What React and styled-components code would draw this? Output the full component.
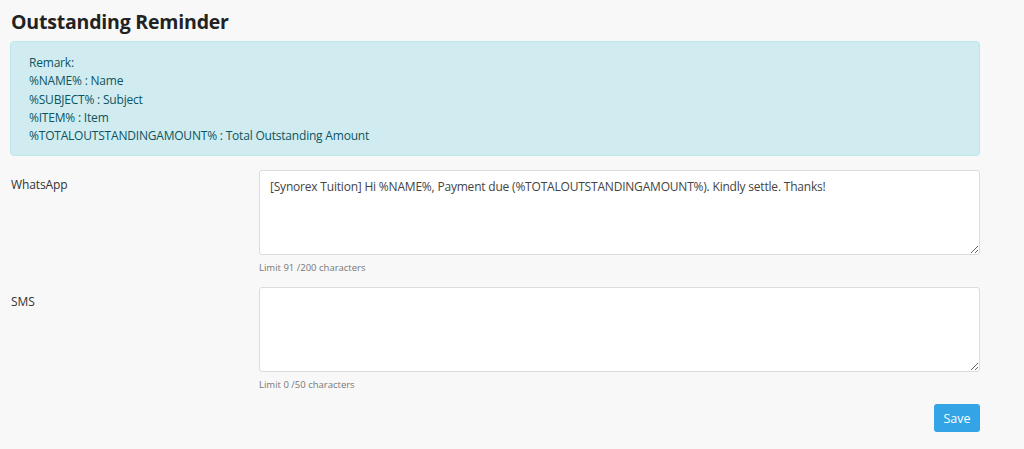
import React, { useState } from 'react';
import styled, { createGlobalStyle } from 'styled-components';

const GlobalStyle = createGlobalStyle`
  html, body {
    margin: 0;
    padding: 0;
    background: #f8f8f8;
  }

  body {
    font-family: "Open Sans", "Noto Sans", sans-serif;
    color: #212529;
  }

  * {
    box-sizing: border-box;
  }
`;

const Page = styled.div`
  width: 1024px;
  padding: 9px 44px 0 10px;
`;

const Title = styled.h1`
  margin: 0 0 7px 1px;
  font-size: 19.5px;
  font-weight: 700;
  letter-spacing: -0.2px;
  line-height: 25px;
  color: #222;
`;

const Alert = styled.div`
  padding: 12px 18px 10px;
  margin-bottom: 14px;
  background: #d1ecf1;
  border: 1px solid #bee5eb;
  border-radius: 4px;
  color: #0c5460;
  font-size: 12px;
  letter-spacing: -0.2px;
  line-height: 18.3px;

  p {
    margin: 0;
  }
`;

const FormRow = styled.div`
  display: grid;
  grid-template-columns: 249px 1fr;
  margin-bottom: 13px;
`;

const Label = styled.label`
  padding: 6px 0 0 1px;
  font-size: 12px;
  letter-spacing: -0.1px;
  color: #333;
`;

const Field = styled.div`
  display: flex;
  flex-direction: column;
`;

const TextArea = styled.textarea`
  height: 85px;
  padding: 7px 10px;
  border: 1px solid #dcdcdc;
  border-radius: 3px;
  background: #fff;
  font-family: inherit;
  font-size: 12px;
  letter-spacing: -0.2px;
  color: #444;
  resize: vertical;
  outline: none;
`;

const Hint = styled.small`
  margin-top: 6px;
  font-size: 9.5px;
  color: #777;
`;

const Actions = styled.div`
  display: flex;
  justify-content: flex-end;
  margin-top: 5px;
`;

const Button = styled.button`
  width: 46px;
  height: 28px;
  padding: 0;
  border: none;
  border-radius: 3px;
  background: #33a5e6;
  color: #fff;
  font-family: inherit;
  font-size: 12.5px;
  cursor: pointer;
`;

const placeholders = [
  ['%NAME%', 'Name'],
  ['%SUBJECT%', 'Subject'],
  ['%ITEM%', 'Item'],
  ['%TOTALOUTSTANDINGAMOUNT%', 'Total Outstanding Amount'],
];

const MessageField = ({ label, value, onChange, limit }) => (
  <FormRow>
    <Label>{label}</Label>
    <Field>
      <TextArea value={value} onChange={(e) => onChange(e.target.value.slice(0, limit))} />
      <Hint>Limit {value.length} /{limit} characters</Hint>
    </Field>
  </FormRow>
);

const App = () => {
  const [whatsapp, setWhatsapp] = useState(
    '[Synorex Tuition] Hi %NAME%, Payment due (%TOTALOUTSTANDINGAMOUNT%). Kindly settle. Thanks!'
  );
  const [sms, setSms] = useState('');

  return (
    <Page>
      <GlobalStyle />
      <Title>Outstanding Reminder</Title>
      <Alert>
        <p>Remark:</p>
        {placeholders.map(([key, name]) => (
          <p key={key}>{key} : {name}</p>
        ))}
      </Alert>
      <MessageField label="WhatsApp" value={whatsapp} onChange={setWhatsapp} limit={200} />
      <MessageField label="SMS" value={sms} onChange={setSms} limit={50} />
      <Actions>
        <Button type="button">Save</Button>
      </Actions>
    </Page>
  );
};

export default App;
